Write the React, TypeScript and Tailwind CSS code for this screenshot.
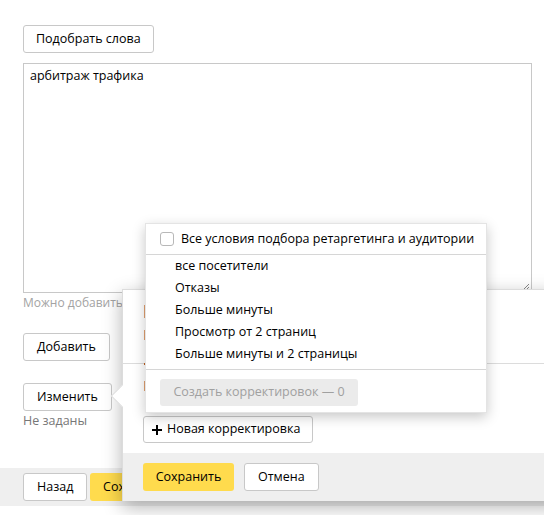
import React from "react";

const btn =
  "h-[28px] px-[13px] border border-[#c8c8c8] rounded-[3px] bg-white text-[12.5px] text-black leading-none inline-flex items-center";

export default function App() {
  return (
    <div
      className="relative w-[544px] h-[515px] bg-white overflow-hidden text-black"
      style={{ fontFamily: '"Open Sans", "Liberation Sans", sans-serif' }}
    >
      {/* base page */}
      <div className="flex flex-col items-start pt-[25px] px-[23px]">
        <button className="h-[28px] px-[12px] border border-[#c8c8c8] rounded-[3px] bg-white text-[12.5px] text-black leading-none inline-flex items-center">
          Подобрать слова
        </button>
        <div className="relative mt-[10px] w-[509px] h-[230px] border border-[#c8c8c8] px-[6px] pt-[3px] text-[12.5px]">
          арбитраж трафика
          <svg className="absolute right-[1px] bottom-[1px]" width="8" height="8" viewBox="0 0 8 8">
            <path d="M7 1 L1 7 M7 4 L4 7" stroke="#888" strokeWidth="1" />
          </svg>
        </div>
        <div className="mt-[2px] text-[12px] leading-[16px] text-[#a3a3a3] whitespace-nowrap">
          Можно добавить ещё 197 фраз
        </div>
        <button className={`${btn} mt-[22px]`}>Добавить</button>
        <button className={`${btn} mt-[22px]`}>Изменить</button>
        <div className="mt-[2px] text-[12.5px] leading-[16px] text-[#777]">Не заданы</div>
      </div>
      <div className="mt-[39px] h-[38px] bg-[#efefef] px-[23px] flex items-center gap-[3px]">
        <button className={btn}>Назад</button>
        <button className="h-[28px] w-[91px] rounded-[3px] bg-[#ffdb4d] text-[12.5px] flex items-center justify-center">
          Сохранить
        </button>
      </div>

      {/* popup */}
      <div className="absolute left-[122px] top-[289px] w-[440px] h-[212px] bg-white border border-[#dcdcdc] shadow-[0_6px_18px_rgba(0,0,0,0.3)]">
        <div className="absolute left-[-9px] top-[98px] w-[16px] h-[16px] bg-white border-l border-b border-[#dcdcdc] rotate-45" />
        <div className="relative flex flex-col pl-[21px] h-[73px] pt-[15px] gap-[12px]">
          <div className="w-[1px] h-[13px] bg-[#e0a070]" />
          <div className="w-[1px] h-[10px] bg-[#e0a070]" />
        </div>
        <div className="border-t border-[#dcdcdc] pl-[21px] h-[53px] flex flex-col">
          <div className="w-[2px] h-[2px] bg-[#c06020] -mt-[1px]" />
          <div className="w-[1px] h-[10px] bg-[#e0a070] mt-[16px]" />
        </div>
        <div className="h-[37px] pl-[20px] flex items-start">
          <button className="h-[27px] pl-[8px] pr-[12px] border border-[#c8c8c8] rounded-[3px] bg-white text-[12.5px] flex items-center gap-[5px]">
            <svg width="10" height="10" viewBox="0 0 10 10">
              <path d="M5 0 V10 M0 5 H10" stroke="#000" strokeWidth="2" />
            </svg>
            Новая корректировка
          </button>
        </div>
        <div className="h-[48px] bg-[#efefef] pl-[20px] pt-[10px] flex items-start gap-[10px]">
          <button className="h-[28px] w-[91px] rounded-[3px] bg-[#ffdb4d] text-[12.5px] flex items-center justify-center">
            Сохранить
          </button>
          <button className={btn}>Отмена</button>
        </div>
      </div>

      {/* dropdown */}
      <div className="absolute left-[145px] top-[223px] w-[342px] h-[190px] bg-white border border-[#e4e4e4] shadow-[0_4px_12px_rgba(0,0,0,0.22)] flex flex-col text-[12.5px]">
        <div className="h-[31px] flex items-center pl-[14px] border-b border-[#d6d6d6] shrink-0">
          <span className="w-[14px] h-[14px] border border-[#b8b8b8] rounded-[3px] bg-white mr-[7px]" />
          Все условия подбора ретаргетинга и аудитории
        </div>
        <div className="flex flex-col pl-[29px] pb-[4px] border-b border-[#d6d6d6]">
          {["все посетители", "Отказы", "Больше минуты", "Просмотр от 2 страниц", "Больше минуты и 2 страницы"].map(
            (t) => (
              <div key={t} className="h-[22px] flex items-center">
                {t}
              </div>
            )
          )}
        </div>
        <div className="pl-[14px] pt-[9px]">
          <div className="h-[27px] w-[198px] rounded-[3px] bg-[#ebebeb] text-[#a0a0a0] flex items-center justify-center">
            Создать корректировок — 0
          </div>
        </div>
      </div>
    </div>
  );
}
